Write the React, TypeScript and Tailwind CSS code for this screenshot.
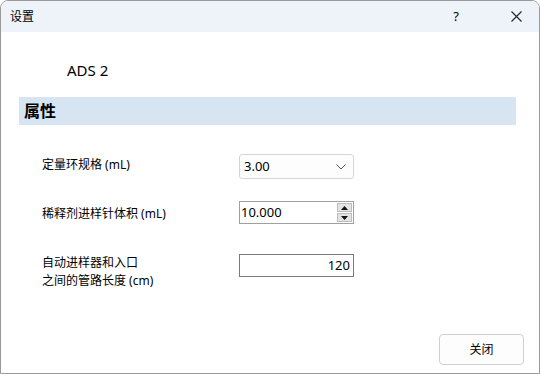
import React from "react";

const font = { fontFamily: '"Noto Sans", "Noto Sans CJK SC", sans-serif' };

export default function App() {
  return (
    <div
      className="w-[540px] h-[374px] bg-white border border-[#9a9a9a] rounded-t-[8px] overflow-hidden flex flex-col text-[12px] text-black"
      style={font}
    >
      {/* Title bar */}
      <div className="h-[31px] bg-[#eef3f9] flex items-center pl-[9px] shrink-0">
        <span className="text-[12px] leading-none">设置</span>
        <div className="flex-1" />
        <span className="w-[46px] text-center text-[13px] mr-[14px]">?</span>
        <div className="w-[46px] h-full flex items-center justify-center">
          <svg width="11" height="11" viewBox="0 0 11 11">
            <path d="M0.5 0.5 L10.5 10.5 M10.5 0.5 L0.5 10.5" stroke="#222" strokeWidth="1.1" />
          </svg>
        </div>
      </div>

      {/* Content */}
      <div className="flex-1 flex flex-col pl-[18px] pr-[23px]">
        <div className="pl-[48px] pt-[26px] text-[15px] leading-[24px]">ADS 2</div>
        <div className="mt-[15px] h-[28px] bg-[#d7e4f2] flex items-center pl-[5px] text-[16px] font-bold">
          属性
        </div>

        <div className="pl-[23px] mt-[29px] flex items-center">
          <span className="w-[197px] leading-[16px] -mt-[4px]">定量环规格 (mL)</span>
          <div className="w-[115px] h-[25px] border border-[#d5d5d5] rounded-[3px] flex items-center pl-[4px] pr-[7px] bg-[#fdfdfd]">
            <span className="text-[13px] flex-1">3.00</span>
            <svg width="10" height="6" viewBox="0 0 10 6">
              <path d="M0.5 0.5 L5 5 L9.5 0.5" fill="none" stroke="#555" strokeWidth="1" />
            </svg>
          </div>
        </div>

        <div className="pl-[23px] mt-[22px] flex items-center">
          <span className="w-[197px] leading-[16px] mt-[2px]">稀释剂进样针体积 (mL)</span>
          <div className="w-[115px] h-[23px] border border-[#a0a0a0] flex items-center pl-[1px] pr-[1px] bg-white">
            <span className="text-[13px] flex-1">10.000</span>
            <div className="w-[15px] h-[19px] flex flex-col gap-[1px]">
              <div className="flex-1 bg-[#e3e3e3] border border-[#bdbdbd] flex items-center justify-center">
                <svg width="7" height="4" viewBox="0 0 7 4"><path d="M0 4 L3.5 0 L7 4Z" fill="#111" /></svg>
              </div>
              <div className="flex-1 bg-[#e3e3e3] border border-[#bdbdbd] flex items-center justify-center">
                <svg width="7" height="4" viewBox="0 0 7 4"><path d="M0 0 L3.5 4 L7 0Z" fill="#111" /></svg>
              </div>
            </div>
          </div>
        </div>

        <div className="pl-[23px] mt-[30px] flex items-start">
          <div className="w-[197px] leading-[18px] flex flex-col">
            <span>自动进样器和入口</span>
            <span>之间的管路长度 (cm)</span>
          </div>
          <div className="w-[115px] h-[23px] border border-[#7a7a7a] flex items-center justify-end pr-[3px] bg-white">
            <span className="text-[13px]">120</span>
          </div>
        </div>

        <div className="flex-1" />
        <div className="flex justify-end pb-[8px]">
          <div className="w-[85px] h-[31px] -mr-[8px] border border-[#d0d0d0] rounded-[4px] bg-[#fdfdfd] flex items-center justify-center text-[12px]">
            关闭
          </div>
        </div>
      </div>
    </div>
  );
}
